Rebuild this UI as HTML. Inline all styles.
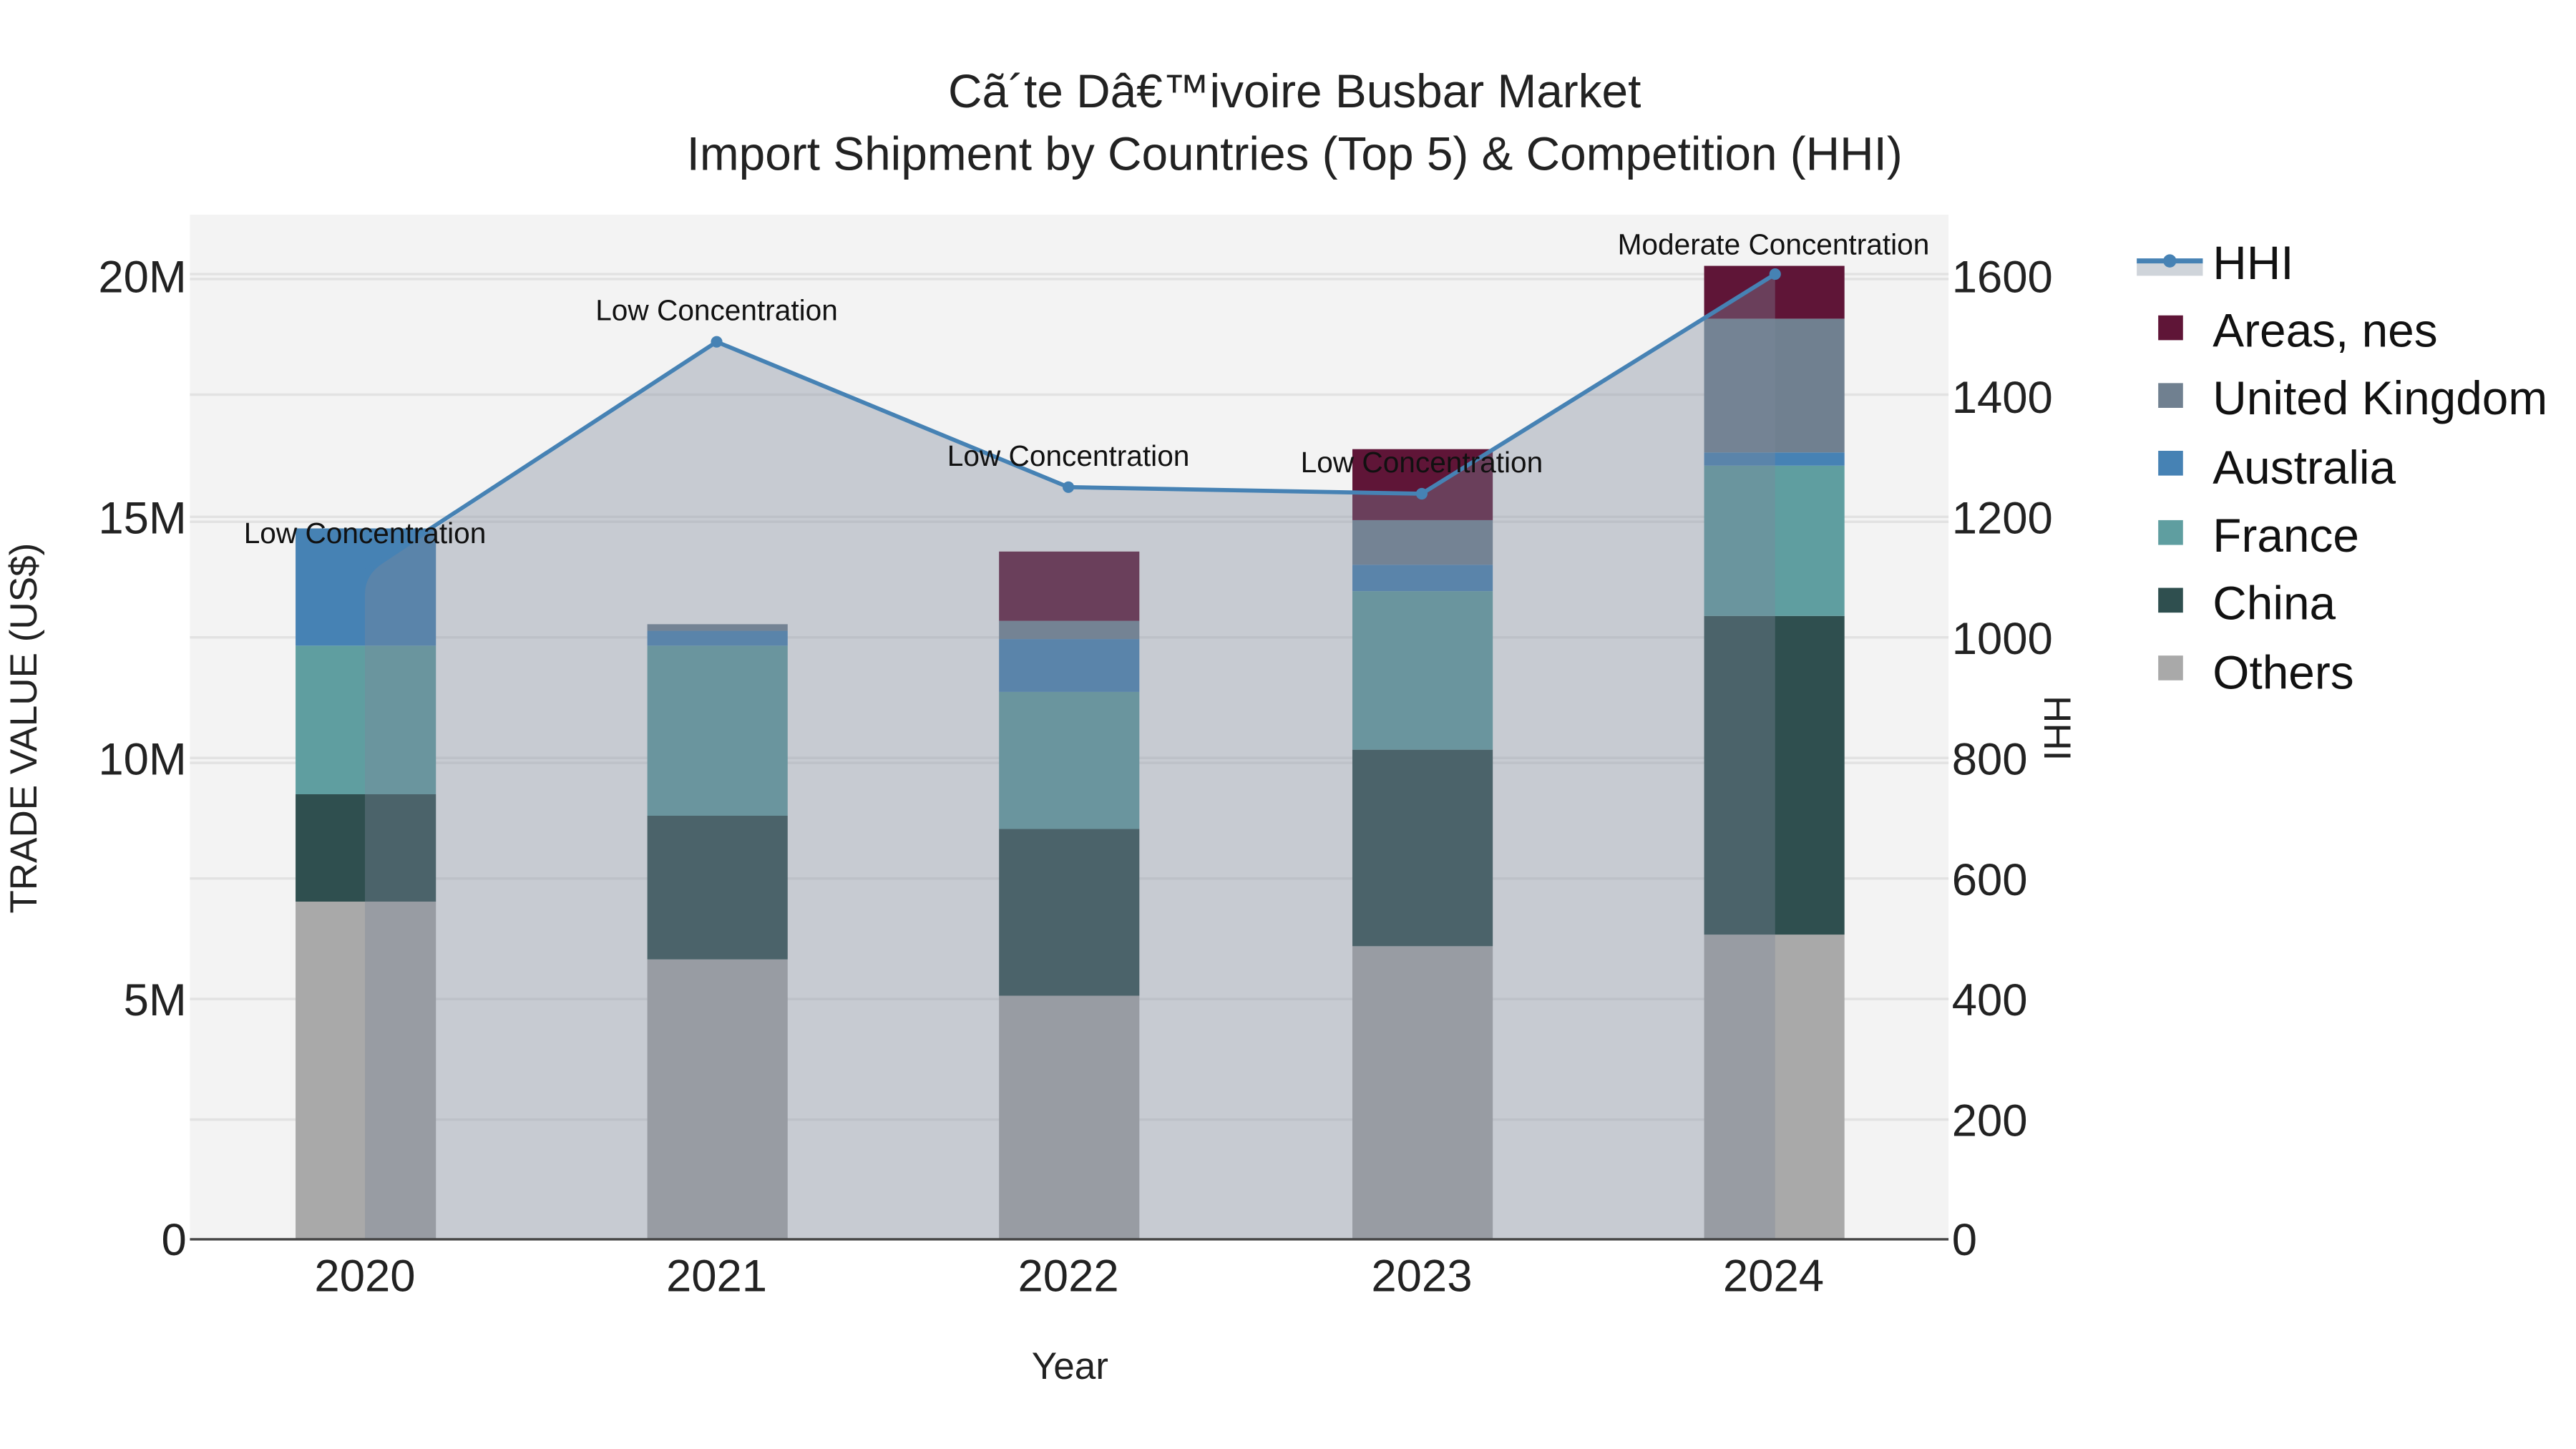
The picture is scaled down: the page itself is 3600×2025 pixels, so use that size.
<!DOCTYPE html>
<html><head><meta charset="utf-8"><style>html,body{margin:0;padding:0;background:#fff}svg{display:block}</style></head>
<body>
<svg width="3600" height="2025" viewBox="0 0 1560 877.5" xmlns="http://www.w3.org/2000/svg" font-family="'Liberation Sans', sans-serif">
<rect width="1560" height="877.5" fill="#fff"/>
<rect x="115" y="130" width="1065" height="620" fill="#f3f3f3"/>
<g stroke="#e2e2e2" stroke-width="1.5">
<line x1="115" x2="1180" y1="166" y2="166"/><line x1="115" x2="1180" y1="169" y2="169"/>
<line x1="115" x2="1180" y1="239" y2="239"/>
<line x1="115" x2="1180" y1="313" y2="313"/><line x1="115" x2="1180" y1="316" y2="316"/>
<line x1="115" x2="1180" y1="386" y2="386"/>
<line x1="115" x2="1180" y1="459" y2="459"/><line x1="115" x2="1180" y1="462" y2="462"/>
<line x1="115" x2="1180" y1="532" y2="532"/>
<line x1="115" x2="1180" y1="605" y2="605"/>
<line x1="115" x2="1180" y1="678" y2="678"/>
</g>
<g>
<rect x="179" y="546" width="85" height="204" fill="#a9a9a9"/>
<rect x="179" y="481" width="85" height="65" fill="#2f4f4f"/>
<rect x="179" y="391" width="85" height="90" fill="#5f9ea0"/>
<rect x="179" y="320" width="85" height="71" fill="#4682b4"/>

<rect x="392" y="581" width="85" height="169" fill="#a9a9a9"/>
<rect x="392" y="494" width="85" height="87" fill="#2f4f4f"/>
<rect x="392" y="391" width="85" height="103" fill="#5f9ea0"/>
<rect x="392" y="382" width="85" height="9" fill="#4682b4"/>
<rect x="392" y="378" width="85" height="4" fill="#708090"/>

<rect x="605" y="603" width="85" height="147" fill="#a9a9a9"/>
<rect x="605" y="502" width="85" height="101" fill="#2f4f4f"/>
<rect x="605" y="419" width="85" height="83" fill="#5f9ea0"/>
<rect x="605" y="387" width="85" height="32" fill="#4682b4"/>
<rect x="605" y="376" width="85" height="11" fill="#708090"/>
<rect x="605" y="334" width="85" height="42" fill="#5f1537"/>

<rect x="819" y="573" width="85" height="177" fill="#a9a9a9"/>
<rect x="819" y="454" width="85" height="119" fill="#2f4f4f"/>
<rect x="819" y="358" width="85" height="96" fill="#5f9ea0"/>
<rect x="819" y="342" width="85" height="16" fill="#4682b4"/>
<rect x="819" y="315" width="85" height="27" fill="#708090"/>
<rect x="819" y="272" width="85" height="43" fill="#5f1537"/>

<rect x="1032" y="566" width="85" height="184" fill="#a9a9a9"/>
<rect x="1032" y="373" width="85" height="193" fill="#2f4f4f"/>
<rect x="1032" y="282" width="85" height="91" fill="#5f9ea0"/>
<rect x="1032" y="274" width="85" height="8" fill="#4682b4"/>
<rect x="1032" y="193" width="85" height="81" fill="#708090"/>
<rect x="1032" y="161" width="85" height="32" fill="#5f1537"/>
</g>
<path d="M221,750 L221,360 Q221,348 232,341 L434,207 L647,295 L861,299 L1075,166 L1075,750 Z" fill="rgb(125,136,155)" fill-opacity="0.37"/>
<polyline points="221,346 434,207 647,295 861,299 1075,166" fill="none" stroke="#4682b4" stroke-width="2.5"/>
<g fill="#4682b4"><circle cx="434" cy="207" r="3.5"/><circle cx="647" cy="295" r="3.5"/><circle cx="861" cy="299" r="3.5"/><circle cx="1075" cy="166" r="3.5"/></g>
<line x1="115" x2="1180" y1="750.5" y2="750.5" stroke="#444" stroke-width="1.5"/>
<g font-size="17.6" fill="#111" text-anchor="middle">
<text x="221" y="329">Low Concentration</text>
<text x="434" y="194">Low Concentration</text>
<text x="647" y="282">Low Concentration</text>
<text x="861" y="286">Low Concentration</text>
<text x="1074" y="154">Moderate Concentration</text>
</g>
<g font-size="28.5" fill="#222" text-anchor="middle">
<text x="784" y="65">Cã´te Dâ€™ivoire Busbar Market</text>
<text x="784" y="103">Import Shipment by Countries (Top 5) &amp; Competition (HHI)</text>
</g>
<g font-size="27.5" fill="#222" text-anchor="end">
<text x="113" y="760">0</text><text x="113" y="615">5M</text><text x="113" y="469">10M</text><text x="113" y="323">15M</text><text x="113" y="177">20M</text>
</g>
<g font-size="27.5" fill="#222">
<text x="1182" y="760">0</text><text x="1182" y="688">200</text><text x="1182" y="615">400</text><text x="1182" y="542">600</text><text x="1182" y="469">800</text><text x="1182" y="396">1000</text><text x="1182" y="323">1200</text><text x="1182" y="250">1400</text><text x="1182" y="177">1600</text>
</g>
<g font-size="27.5" fill="#222" text-anchor="middle">
<text x="221" y="782">2020</text><text x="434" y="782">2021</text><text x="647" y="782">2022</text><text x="861" y="782">2023</text><text x="1074" y="782">2024</text>
</g>
<text x="648" y="835" font-size="23" fill="#222" text-anchor="middle">Year</text>
<text transform="translate(22,441) rotate(-90)" font-size="23" fill="#222" text-anchor="middle">TRADE VALUE (US$)</text>
<text transform="translate(1238,441) rotate(90)" font-size="23" fill="#222" text-anchor="middle">HHI</text>
<rect x="1294" y="159" width="40" height="8" fill="#cfd4da"/>
<line x1="1294" x2="1334" y1="158" y2="158" stroke="#4682b4" stroke-width="3"/>
<circle cx="1314" cy="158" r="4" fill="#4682b4"/>
<rect x="1307" y="191" width="15" height="15" fill="#5f1537"/>
<rect x="1307" y="232" width="15" height="15" fill="#708090"/>
<rect x="1307" y="273" width="15" height="15" fill="#4682b4"/>
<rect x="1307" y="315" width="15" height="15" fill="#5f9ea0"/>
<rect x="1307" y="356" width="15" height="15" fill="#2f4f4f"/>
<rect x="1307" y="397" width="15" height="15" fill="#a9a9a9"/>
<g font-size="28.5" fill="#111">
<text x="1340" y="169">HHI</text>
<text x="1340" y="210">Areas, nes</text>
<text x="1340" y="251">United Kingdom</text>
<text x="1340" y="293">Australia</text>
<text x="1340" y="334">France</text>
<text x="1340" y="375">China</text>
<text x="1340" y="417">Others</text>
</g>
</svg>
</body></html>
